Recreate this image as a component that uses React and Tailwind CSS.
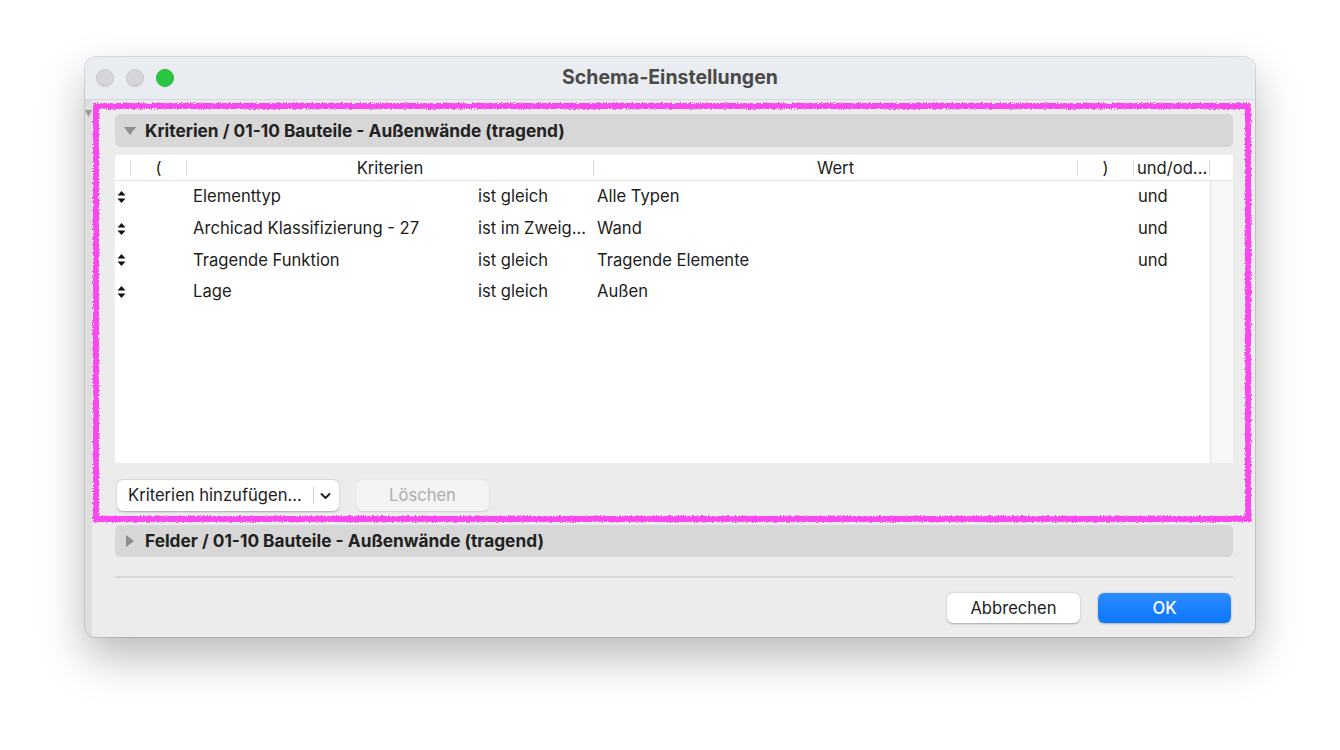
import React from 'react';

const rows = [
  { name: 'Elementtyp', op: 'ist gleich', value: 'Alle Typen', link: 'und' },
  { name: 'Archicad Klassifizierung - 27', op: 'ist im Zweig...', value: 'Wand', link: 'und' },
  { name: 'Tragende Funktion', op: 'ist gleich', value: 'Tragende Elemente', link: 'und' },
  { name: 'Lage', op: 'ist gleich', value: 'Außen', link: '' },
];

const SortIcon = () => (
  <svg width="9" height="14" viewBox="0 0 9 14" className="shrink-0">
    <path d="M4.5 1 L8.5 5.5 L0.5 5.5 Z" fill="#111" />
    <path d="M4.5 13 L8.5 8.5 L0.5 8.5 Z" fill="#111" />
  </svg>
);

const Disclosure = ({ open }) => (
  <svg width="14" height="14" viewBox="0 0 14 14" className="shrink-0">
    {open ? (
      <path d="M1 3 L13 3 L7 11 Z" fill="#8d8d8d" />
    ) : (
      <path d="M3 1 L11 7 L3 13 Z" fill="#8d8d8d" />
    )}
  </svg>
);

const HeaderSep = () => <div className="w-px h-[16px] bg-[#dcdcdc]" />;

const App = () => {
  return (
    <div
      className="w-[1340px] h-[750px] bg-white pt-[57px] pl-[85px]"
      style={{ fontFamily: 'Inter, "Liberation Sans", sans-serif' }}
    >
      <div className="relative w-[1170px] h-[580px] rounded-[11px] bg-[#ececec] overflow-hidden shadow-[0_20px_45px_rgba(0,0,0,0.28),0_0_0_1px_rgba(0,0,0,0.12)] flex flex-col">
        {/* Title bar */}
        <div className="relative h-[43px] shrink-0 bg-[#e9edf1] border-b border-[#d4d6d9] flex items-center justify-center">
          <div className="absolute left-[11px] top-[12px] flex gap-[12px]">
            <div className="w-[18px] h-[18px] rounded-full bg-[#d6d6d9] border border-[#c6c6c9]" />
            <div className="w-[18px] h-[18px] rounded-full bg-[#d6d6d9] border border-[#c6c6c9]" />
            <div className="w-[18px] h-[18px] rounded-full bg-[#2ac641] border border-[#22b23a]" />
          </div>
          <span className="text-[19.5px] font-bold text-[#4a4a4a]">Schema-Einstellungen</span>
        </div>

        {/* Body */}
        <div className="flex flex-1 min-h-0">
          <div className="w-[7px] bg-[#dedede] flex flex-col items-center pt-[10px]">
            <svg width="7" height="8" viewBox="0 0 7 8">
              <path d="M0 0 L7 0 L3.5 7 Z" fill="#9a9a9a" />
            </svg>
          </div>
          <div className="flex-1 pl-[23px] pr-[22px] pt-[14px] flex flex-col">
            {/* Kriterien header */}
            <div className="h-[33px] rounded-[5px] bg-[#d7d7d7] flex items-center pl-[8px] gap-[8px]">
              <Disclosure open />
              <span className="text-[17.3px] font-bold text-[#222]">Kriterien / 01-10 Bauteile - Außenwände (tragend)</span>
            </div>

            {/* Table */}
            <div className="mt-[8px] h-[308px] bg-white flex flex-col text-[16.6px] text-[#1d1d1d]">
              <div className="h-[26px] shrink-0 border-b border-[#e2e2e2] flex items-center pt-[1px]">
                <div className="w-[15px]" />
                <HeaderSep />
                <div className="w-[55px] text-center">(</div>
                <HeaderSep />
                <div className="w-[406px] text-center">Kriterien</div>
                <HeaderSep />
                <div className="w-[483px] text-center">Wert</div>
                <HeaderSep />
                <div className="w-[55px] text-center">)</div>
                <HeaderSep />
                <div className="w-[75px] pl-[3px] whitespace-nowrap">und/od...</div>
                <HeaderSep />
              </div>
              <div className="flex flex-1 min-h-0">
                <div className="flex-1 flex flex-col">
                  {rows.map((r) => (
                    <div key={r.name} className="h-[31.7px] flex items-center">
                      <div className="w-[78px] pl-[2px]">
                        <SortIcon />
                      </div>
                      <div className="w-[285px] whitespace-nowrap">{r.name}</div>
                      <div className="w-[119px] whitespace-nowrap">{r.op}</div>
                      <div className="w-[541px] whitespace-nowrap">{r.value}</div>
                      <div>{r.link}</div>
                    </div>
                  ))}
                </div>
                <div className="w-[23px] bg-[#f7f7f7] border-l border-[#e4e4e4]" />
              </div>
            </div>

            {/* Criteria buttons */}
            <div className="mt-[17px] h-[31px] flex items-center gap-[17px] pl-[2px]">
              <div className="w-[222px] h-[31px] bg-white rounded-[6px] shadow-[0_0.5px_2px_rgba(0,0,0,0.3)] flex items-center">
                <span className="pl-[11px] w-[196px] text-[16.6px] text-[#1d1d1d] whitespace-nowrap">Kriterien hinzufügen...</span>
                <div className="w-px h-[17px] bg-[#d0d0d0]" />
                <svg width="25" height="12" viewBox="0 0 25 12">
                  <path d="M7.5 4 L11.5 8 L15.5 4" fill="none" stroke="#222" strokeWidth="2" strokeLinecap="round" strokeLinejoin="round" />
                </svg>
              </div>
              <div className="w-[133px] h-[31px] rounded-[6px] bg-[#f3f3f3] shadow-[0_0.5px_1.5px_rgba(0,0,0,0.12)] flex items-center justify-center text-[16.6px] text-[#adadad]">
                Löschen
              </div>
            </div>

            {/* Felder header */}
            <div className="mt-[14px] h-[32px] rounded-[5px] bg-[#d7d7d7] flex items-center pl-[8px] gap-[8px]">
              <Disclosure />
              <span className="text-[17.3px] font-bold text-[#222]">Felder / 01-10 Bauteile - Außenwände (tragend)</span>
            </div>

            <div className="mt-[19px] h-[2px] bg-[#d6d6d6]" />

            {/* Dialog buttons */}
            <div className="mt-[15px] flex justify-end gap-[18px] pr-[2px]">
              <div className="w-[133px] h-[30px] bg-white rounded-[6px] shadow-[0_0.5px_2px_rgba(0,0,0,0.3)] flex items-center justify-center text-[16.6px] text-[#1d1d1d]">
                Abbrechen
              </div>
              <div className="w-[133px] h-[30px] rounded-[6px] bg-gradient-to-b from-[#2a8cff] to-[#0a75fb] shadow-[0_0.5px_2px_rgba(0,0,0,0.25)] flex items-center justify-center text-[16.6px] font-medium text-white">
                OK
              </div>
            </div>
          </div>
        </div>

        {/* Magenta annotation */}
        <svg className="absolute left-0 top-0 pointer-events-none" width="1170" height="580">
          <defs>
            <filter id="rough" x="-5%" y="-5%" width="110%" height="110%">
              <feTurbulence type="fractalNoise" baseFrequency="0.8" numOctaves="3" seed="3" />
              <feDisplacementMap in="SourceGraphic" scale="4" />
            </filter>
          </defs>
          <rect x="11" y="49" width="1152" height="413" fill="none" stroke="#fa46f0" strokeWidth="6" filter="url(#rough)" />
        </svg>
      </div>
    </div>
  );
};

export default App;
